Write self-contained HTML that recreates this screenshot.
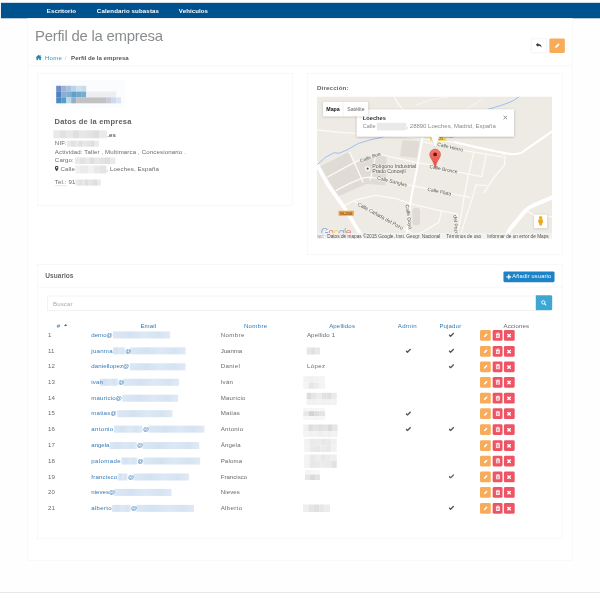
<!DOCTYPE html>
<html lang="es">
<head>
<meta charset="utf-8">
<title>Perfil de la empresa</title>
<style>
*{box-sizing:border-box;margin:0;padding:0}
html,body{width:600px;height:600px;overflow:hidden;background:#fefefe}
body{font-family:"Liberation Sans",sans-serif;}
#s{position:absolute;left:0;top:0;width:1280px;height:1280px;transform:scale(0.46875);transform-origin:0 0;font-size:13px;color:#676a6c;letter-spacing:.28px;line-height:18.57px;background:#fefefe}
a{color:#337ab7;text-decoration:none}
.abs{position:absolute}
.nav{position:absolute;left:1.600px;top:6px;width:1279px;height:32.5px;background:#00528f}
.nav span{position:absolute;top:0;line-height:34px;color:#fff;font-weight:700;letter-spacing:0;white-space:nowrap}
.cont{position:absolute;left:59px;top:38.5px;width:1162px;height:1157px;background:#fff;border:1.500px solid #f0f2f4;border-top:0}
.foot{position:absolute;left:0;top:1263px;width:1280px;height:2px;background:#e4e6e8}
.footb{position:absolute;left:0;top:1265px;width:1280px;height:16px;background:#fff}
h2{position:absolute;left:74.500px;top:57.300px;font-size:31.800px;font-weight:400;line-height:40px;color:#8a8d8f;letter-spacing:-.5px;white-space:nowrap}
.bc{position:absolute;left:76px;top:114px;white-space:nowrap;line-height:18px}
.bc a{color:#3393b6}
.bc b{letter-spacing:0;color:#55585a}
.hr{position:absolute;left:60px;top:139.500px;width:1160px;height:1.5px;background:#eceef0}
.btn{position:absolute;border-radius:3px}
.card{position:absolute;background:#fff;border:1.500px solid #eef1f3}
h3{font-size:16px;font-weight:700;letter-spacing:.45px;color:#5e6163;white-space:nowrap}
.bl{display:inline-block;vertical-align:middle;background:linear-gradient(90deg,#e9e9e9 0 12%,#e2e2e2 12% 24%,#e8e8e8 24% 36%,#dfdfdf 36% 48%,#e7e7e7 48% 62%,#e3e3e3 62% 74%,#dedede 74% 86%,#eaeaea 86%);filter:blur(1.200px)}
.blb{background:linear-gradient(90deg,#dbe7f4,#d3e2f2 30%,#dde8f5 55%,#d5e3f2 80%,#e0eaf6);filter:blur(1.500px)}
#s a.abs{z-index:2}
.ln{position:absolute;left:117px;white-space:nowrap}
</style>
</head>
<body>
<div id="s">
<div class="nav">
<span style="left:98.300px;letter-spacing:.15px">Escritorio</span>
<span style="left:205px;letter-spacing:.3px">Calendario subastas</span>
<span style="left:380px;letter-spacing:.15px">Vehículos</span>
</div>
<div class="cont"></div>
<h2>Perfil de la empresa</h2>
<!-- header buttons -->
<div class="btn" style="left:1132.500px;top:81.500px;width:34px;height:31px;border:1.500px solid #e7eaec;background:#fff">
<svg class="abs" style="left:9.500px;top:8px" width="13" height="12" viewBox="0 0 14 13"><path d="M0 5 L5.5 0 V3 C10 3 13.5 5 13.5 12 C12 8.5 10 7 5.5 7 V10 Z" fill="#3c3f41"/></svg>
</div>
<div class="btn" style="left:1172px;top:81.5px;width:33px;height:31px;background:#f8ac59">
<svg class="abs" style="left:11.500px;top:10.500px" width="10.400" height="10.400" viewBox="0 0 10 10"><path d="M0 10 L0.600 6.800 L6.600 0.800 Q7.400 0 8.200 0.800 L9.200 1.800 Q10 2.600 9.200 3.400 L3.200 9.400 Z" fill="#fff"/></svg>
</div>
<div class="bc">
<svg style="vertical-align:-1.5px;margin-right:3px" width="13" height="12" viewBox="0 0 13 12"><path d="M6.5 0 L13 5.6 L12.2 6.5 L11.2 5.7 V11.5 H7.8 V7.6 H5.2 V11.5 H1.8 V5.7 L.8 6.5 L0 5.6 Z M9.6 .8 H11.2 V3.2 L9.6 1.9 Z" fill="#1f86ab"/></svg>
<a style="letter-spacing:.55px">Home</a><span style="color:#c0c2c4;margin:0 9.500px 0 5.500px">/</span><b>Perfil de la empresa</b>
</div>
<div class="hr"></div>

<!-- LEFT CARD -->
<div class="card" style="left:80px;top:156px;width:544.5px;height:282.5px"></div>
<svg class="abs" style="left:100px;top:165px;filter:blur(1.3px)" width="190" height="75" viewBox="46.875 77.344 89.0625 35.156">
<rect x="51" y="80" width="74" height="27.5" fill="#fbfcfd"/>
<g>
<rect x="56.2" y="85.8" width="5.1" height="5.9" fill="#6c8cc8"/><rect x="61.2" y="85.8" width="5.1" height="5.9" fill="#a0b0d8"/><rect x="66.2" y="85.8" width="5.1" height="5.9" fill="#a8c0dc"/><rect x="71.2" y="85.8" width="5.1" height="5.9" fill="#b8d4e8"/><rect x="76.2" y="85.8" width="5.1" height="5.9" fill="#d0e0ec"/><rect x="81.2" y="85.8" width="5.1" height="5.9" fill="#c8dcec"/>
<rect x="56.2" y="91.6" width="5.1" height="5.9" fill="#4f7fc0"/><rect x="61.2" y="91.6" width="5.1" height="5.9" fill="#90acd4"/><rect x="66.2" y="91.6" width="5.1" height="5.9" fill="#80b0d4"/><rect x="71.2" y="91.6" width="5.1" height="5.9" fill="#60a0c8"/><rect x="76.2" y="91.6" width="5.1" height="5.9" fill="#70a8cc"/><rect x="81.2" y="91.6" width="5.1" height="5.9" fill="#78accc"/><rect x="86.2" y="91.6" width="30" height="5.9" fill="#eceef2"/>
<rect x="56.2" y="97.4" width="5.1" height="5.9" fill="#5088c0"/><rect x="61.2" y="97.4" width="5.1" height="5.9" fill="#50a0c8"/><rect x="66.2" y="97.4" width="5.1" height="5.9" fill="#c0d8e8"/><rect x="71.2" y="97.4" width="5.1" height="5.9" fill="#90b0c8"/><rect x="76.2" y="97.4" width="30.5" height="5.9" fill="#c2c2c2"/><rect x="106.5" y="97.4" width="5" height="5.9" fill="#c8ccd8"/><rect x="111.2" y="97.4" width="5" height="5.9" fill="#d0d8ec"/><rect x="116.2" y="97.4" width="4.8" height="5.9" fill="#dce4f4"/>
</g>
</svg>
<h3 class="abs" style="left:116.5px;top:248.2px;line-height:22px">Datos de la empresa</h3>
<div class="ln" style="top:278.5px"><span class="bl" style="width:114px;height:17px;margin-top:-4px;margin-right:1px;margin-left:-3px"></span><b style="letter-spacing:0;color:#55585a">.es</b></div>
<div class="ln" style="top:296.8px">NIF: <span class="bl" style="width:68px;height:13px;margin-left:-4px"></span></div>
<div class="ln" style="top:314.6px">Actividad: Taller , Multimarca , Concesionario .</div>
<div class="ln" style="top:333.2px">Cargo: <span class="bl" style="width:86px;height:14px;margin-left:-2px"></span></div>
<div class="ln" style="top:351.8px"><svg style="vertical-align:-1.5px;margin-right:4px" width="8" height="12" viewBox="0 0 8 12"><path d="M4 0 A4 4 0 0 1 8 4 C8 6.5 5.2 9.5 4 12 C2.8 9.5 0 6.500 0 4 A4 4 0 0 1 4 0 Z M4 2.300 A1.700 1.700 0 1 0 4 5.700 A1.700 1.700 0 1 0 4 2.300 Z" fill="#3c3f41" fill-rule="evenodd"/></svg>Calle <span class="bl" style="width:66px;height:17px;background:linear-gradient(90deg,#f0f0f0 0 15%,#ebebeb 15% 40%,#f1f1f1 40% 60%,#e9e9e9 60% 80%,#e4e4e4 80%);margin-left:-3px"></span>, Loeches, España</div>
<div class="ln" style="top:380px"><span style="border-bottom:1.5px dotted #999">Tel.:</span> 91<span class="bl" style="width:54px;height:13px"></span></div>

<!-- RIGHT CARD -->
<div class="card" style="left:655.5px;top:156px;width:544.5px;height:387.5px"></div>
<b class="abs" style="left:676px;top:177.500px;letter-spacing:.45px;color:#5e6163">Dirección:</b>
<!--MAPSTART--><svg class="abs" style="left:675.500px;top:206.300px;letter-spacing:0" width="502.200" height="303.500" viewBox="316.640 96.700 235.406 142.266" font-family="'Liberation Sans',sans-serif">
<defs><clipPath id="mc"><rect x="316.640" y="96.700" width="235.406" height="142.266"/></clipPath>
<linearGradient id="mg" x1="0" y1="0" x2="0" y2="1"><stop offset="0" stop-color="#f4776d"/><stop offset="1" stop-color="#ea4a40"/></linearGradient>
<filter id="sh" x="-10%" y="-20%" width="120%" height="150%"><feGaussianBlur stdDeviation="1"/></filter></defs>
<g clip-path="url(#mc)">
<rect x="316" y="96" width="237" height="144" fill="#eeebe5"/>
<!-- darker blocks -->
<path d="M319.700 166.600 L348.300 152.200 L353 162.500 L360 160 L375.300 154.700 L380.700 154.700 L386.500 156 L385.500 185.500 L366.300 184.100 L338.300 196.300 Z" fill="#e0dcd5"/>
<path d="M402.300 140.500 L419.500 141.500 L416.700 158 L399.800 156.500 Z" fill="#e0dcd5"/>
<rect x="412.250" y="208.250" width="7.500" height="17.250" rx="2.500" fill="#dfdbd4"/>
<!-- thin streets -->
<g fill="none" stroke="#fbfaf7" stroke-width="1.300" stroke-linecap="round" stroke-linejoin="round">
<path d="M317.200 130 L340 132.500 L356 133.500 L400 136 L430 140 L455 142.500"/>
<path d="M394 96.700 L398 104 L403 110"/>
<path d="M416 105 L430 100 L448 97" stroke-width=".9" opacity=".8"/>
<path d="M467 109 L483 98.700" stroke-width=".9" opacity=".8"/>
<path d="M348.800 152.600 L350 153.300 L362.700 182"/>
<path d="M327.300 177.100 L350 164.700 L360 160 L375.300 154.700 L380.700 154.700 L416.700 162.700 L430 164.900 L455 171.700 L481.700 176.700"/>
<path d="M336 190.500 L350 183.300 L362.700 178 L370 177.300 L385 180 L412.700 186 L430 189.300 L470 197.750"/>
<path d="M375.300 156 L370 180"/>
<path d="M423.500 142 L455 149.200 L501.700 156.700"/>
<path d="M505 156.700 L504.200 165 L493.300 178.300 L484.200 192.500"/>
<path d="M473.300 153.300 L468.300 175 L463.300 200 L461 215 L456.500 238"/>
<path d="M485.800 155.800 L481.700 175.800"/>
<path d="M475.800 185 L486.700 185.800 M475.800 185 L471.700 200 L467 213.500 L461 233"/>
<path d="M345 205.250 L355.500 200 L375 195.500 L395 198.500 L410 203.750 L441.500 211.250 L455 213.500 L457.250 215 L456.500 238"/>
<path d="M355 202 L380 216 L402 228 L420 238"/>
<path d="M441.500 211.250 L438.500 222.500 L423.500 231.500 L410 238"/>
<path d="M527.500 211.700 L535 215.800 L552 217"/>
</g>
<circle cx="503.300" cy="156.700" r="1.600" fill="#ece9e2" stroke="#fbfaf7" stroke-width="1"/>
<!-- wider streets -->
<g fill="none" stroke="#ffffff" stroke-linecap="round" stroke-linejoin="round">
<path d="M422.300 137.500 L416.500 170 L410.500 200 L407 230 L405.500 240" stroke-width="2"/>
<path d="M455 142.500 L488.300 150 L510 154.200 Q518 154.500 521.700 152.500 L535 143.300 L552 131.500" stroke-width="2.200"/>
<path d="M316 163 L327.750 185 L345 209 L358.500 231.500 L364 241" stroke-width="3.800"/>
<path d="M503 241 L510 229 L525 210.800 Q530 206.500 536 204.300 L553 197.200" stroke-width="4"/>
</g>
<!-- river -->
<path d="M316 165.500 L325.500 157.300 L333.700 152.900 L338.900 153.400 L347.100 149.900 L358.300 143.500 L370 140 L381 137.600 L390 134 L430 133 L446 137.300 L452 137.700 L460 133 L470 125 L488.300 109.300 L501.700 105.300 L512.300 101.300 L520 96" fill="none" stroke="#9abcf2" stroke-width=".95" stroke-linejoin="round"/>
<!-- labels -->
<g font-size="5" fill="#555555" stroke="#f4f2ec" stroke-width="1.200" paint-order="stroke" stroke-linejoin="round">
<text transform="translate(360.500 162.800) rotate(-21)">Calle Boa</text>
<text x="372" y="168" font-size="5.500" textLength="44" lengthAdjust="spacingAndGlyphs">Polígono Industrial</text>
<text x="372" y="173.600" font-size="5.500" textLength="33.300" lengthAdjust="spacingAndGlyphs">Prado Concejil</text>
<text transform="translate(376.500 179.300) rotate(14)">Calle Sanglas</text>
<text transform="translate(436.800 145.900) rotate(13)">Calle Hierro</text>
<text transform="translate(429 168.200) rotate(11)">Calle Bronce</text>
<text transform="translate(427 191) rotate(11)">Calle Plata</text>
<text transform="translate(357 205.300) rotate(29)">Calle Cañada del Pozo</text>
<text transform="translate(405.300 205) rotate(82)">Calle Goya</text>
<text transform="translate(453.300 215.500) rotate(86)">del Pozo</text>
</g>
<circle cx="367.400" cy="168.800" r="2.700" fill="#fff" stroke="#d8d4cc" stroke-width=".3"/><circle cx="367.400" cy="168.800" r="1.100" fill="#5a5450"/>
<!-- road shields -->
<rect x="338.250" y="210.800" width="15.400" height="5" rx=".6" fill="#f2a544"/>
<text x="346" y="215" font-size="4.300" text-anchor="middle" fill="#5a3a10">M-206</text>
<rect x="430" y="137" width="16" height="4" rx=".6" fill="#f3d548"/>
<text x="438" y="140.500" font-size="3.600" text-anchor="middle" fill="#5a4a10">M-225</text>
<!-- marker -->
<path d="M434.900 149.200 a5.400 5.400 0 0 1 5.400 5.400 c0 3.800 -4.500 6.600 -5.100 13.600 h-.6 c-.6 -7 -5.100 -9.800 -5.100 -13.600 a5.400 5.400 0 0 1 5.400 -5.400 z" fill="url(#mg)" stroke="#cc473d" stroke-width=".5"/>
<circle cx="434.900" cy="154.600" r="1.900" fill="#6a1815"/>
<!-- google logo -->
<text x="320.500" y="236.500" font-size="10.300" font-weight="400" letter-spacing="-.5" opacity=".68" stroke="#fff" stroke-width=".5" paint-order="stroke"><tspan fill="#4a7fe8">G</tspan><tspan fill="#e04a3a">o</tspan><tspan fill="#f2b82e">o</tspan><tspan fill="#4a7fe8">g</tspan><tspan fill="#3aa556">l</tspan><tspan fill="#e04a3a">e</tspan></text>
<!-- bottom bar -->
<rect x="316.500" y="233" width="236" height="6.100" fill="#f3f3f3" opacity=".78"/>
<text x="317.300" y="237.800" font-size="3.600" fill="#6a6a78" opacity=".8">NIC</text>
<g font-size="4.500" fill="#505050">
<text x="327" y="237.900" textLength="113" lengthAdjust="spacingAndGlyphs">Datos de mapas ©2015 Google, Inst. Geogr. Nacional</text>
<text x="446" y="237.900" textLength="35" lengthAdjust="spacingAndGlyphs">Términos de uso</text>
<text x="487" y="237.900" textLength="61.500" lengthAdjust="spacingAndGlyphs">Informar de un error de Maps</text>
</g>
<!-- info window -->
<rect x="356.300" y="110" width="157.600" height="27.400" fill="#000" opacity=".28" filter="url(#sh)"/>
<path d="M431 136.800 L434.900 148 L439 136.800" fill="none" stroke="#b8b4ae" stroke-width=".5" opacity=".7"/>
<path d="M356.300 109.500 H513.900 V136.800 H439 L434.900 147.800 L431 136.800 H356.300 Z" fill="#fff"/>
<text x="362.600" y="120.200" font-size="5.700" font-weight="700" fill="#333">Loeches</text>
<text x="362.600" y="128.600" font-size="5.600" fill="#8a8a8a">Calle</text>
<rect x="376.600" y="123" width="29.400" height="7.500" fill="#e9e9e9" filter="url(#bl1)"/>
<text x="406.300" y="128.600" font-size="5.600" fill="#8a8a8a" textLength="89.200" lengthAdjust="spacingAndGlyphs">, 28890 Loeches, Madrid, España</text>
<path d="M503.300 115.800 l3.600 3.600 m0 -3.600 l-3.600 3.600" stroke="#6a6a6a" stroke-width=".7" fill="none"/>
<!-- map type control -->
<rect x="322.600" y="102.300" width="45.600" height="14.700" fill="#000" opacity=".22" filter="url(#sh)"/>
<rect x="322.600" y="102" width="45.400" height="14.600" rx=".8" fill="#fff"/>
<line x1="343" y1="102" x2="343" y2="116.600" stroke="#ebebeb" stroke-width=".5"/>
<text x="326" y="111.200" font-size="5.300" font-weight="700" fill="#111">Mapa</text>
<text x="347" y="111.200" font-size="5.200" fill="#666">Satélite</text>
<!-- pegman -->
<rect x="534" y="215" width="13.200" height="13.800" fill="#000" opacity=".2" filter="url(#sh)"/>
<rect x="533.800" y="214.700" width="13.200" height="13.600" rx=".8" fill="#fff"/>
<circle cx="540.400" cy="218" r="1.800" fill="#f2b01e"/>
<path d="M538.400 219.300 h4 l.7 3.300 h-1 l-.5 3 h-2.400 l-.5 -3 h-1 z" fill="#f0a81c"/>
</g>
</svg>
<!--MAPEND-->

<!-- USERS CARD -->
<div class="card" style="left:80px;top:563.5px;width:1120px;height:586px"></div>
<!--USERSSTART-->
<div class="abs" style="left:96.5px;top:578.5px;font-size:14px;font-weight:700;letter-spacing:.05px;color:#676a6c;line-height:18px">Usuarios</div>
<div class="abs" style="left:81.500px;top:611.500px;width:1117px;height:1.500px;background:#eceef0"></div>
<div class="btn" style="left:1074px;top:578.500px;width:109px;height:23px;background:#1c84c6;color:#fff;font-size:12px;line-height:23px;white-space:nowrap;letter-spacing:.42px"><svg class="abs" style="left:5.500px;top:6px" width="11" height="11" viewBox="0 0 10 10"><path d="M3.800 0 h2.400 v3.800 h3.800 v2.400 h-3.800 v3.800 h-2.400 v-3.800 h-3.800 v-2.400 h3.800 z" fill="#fff"/></svg><span class="abs" style="left:19px;top:0">Añadir usuario</span></div>
<div class="abs" style="left:101px;top:630.500px;width:1043px;height:32.500px;border:1.500px solid #e5e6e7;border-right:0;background:#fff"></div>
<div class="abs" style="left:113px;top:638.500px;color:#a8aaac;font-size:13px">Buscar</div>
<div class="abs" style="left:1143px;top:629.700px;width:34.500px;height:32.300px;background:#3ea6d2;border-radius:0 3px 3px 0"><svg class="abs" style="left:11px;top:10px" width="12" height="12" viewBox="0 0 12 12"><circle cx="5" cy="5" r="3.600" fill="none" stroke="#fff" stroke-width="1.900"/><path d="M7.600 7.600 L11 11" stroke="#fff" stroke-width="2.200" stroke-linecap="round"/></svg></div>
<div class="abs" style="left:121.3px;top:686.7px;color:#337ab7;white-space:nowrap">#</div>
<svg class="abs" style="left:136px;top:690.5px" width="8" height="5" viewBox="0 0 8 5"><path d="M0 5 L4 0 L8 5 Z" fill="#337ab7"/></svg>
<div class="abs" style="left:299.5px;top:686.7px;color:#337ab7;white-space:nowrap">Email</div>
<div class="abs" style="left:520.3px;top:686.7px;color:#337ab7;white-space:nowrap;letter-spacing:.7px">Nombre</div>
<div class="abs" style="left:702.2px;top:686.7px;color:#337ab7;white-space:nowrap">Apellidos</div>
<div class="abs" style="left:848.3px;top:686.7px;color:#337ab7;white-space:nowrap;letter-spacing:.9px">Admin</div>
<div class="abs" style="left:937.4px;top:686.7px;color:#337ab7;white-space:nowrap">Pujador</div>
<div class="abs" style="left:1074px;top:686.7px;color:#676a6c;white-space:nowrap">Acciones</div>
<div class="abs" style="left:102.400px;top:705.4px">1</div>
<a class="abs" style="left:194.8px;top:705.4px;white-space:nowrap;letter-spacing:-0.01px">demo@</a><span class="abs blb" style="left:241.4px;top:707.2px;width:121.2px;height:15px"></span>
<div class="abs" style="left:470.700px;top:705.4px;white-space:nowrap;letter-spacing:0.92px">Nombre</div>
<div class="abs" style="left:654.700px;top:705.4px;white-space:nowrap;letter-spacing:0.33px">Apellido 1</div>
<svg class="abs" style="left:956.7px;top:708.7px" width="12" height="10" viewBox="0 0 12 10"><path d="M1 5.200 L4.300 8.500 L11 1.500" fill="none" stroke="#55585a" stroke-width="2.900"/></svg>
<div class="btn" style="left:1024px;top:703.5px;width:23px;height:23px;background:#f8ac59"><svg class="abs" style="left:7.500px;top:7.300px" width="8.600" height="8.600" viewBox="0 0 10 10"><path d="M0 10 L0.600 6.800 L6.600 0.800 Q7.400 0 8.200 0.800 L9.200 1.800 Q10 2.600 9.200 3.400 L3.200 9.400 Z" fill="#fff"/></svg></div>
<div class="btn" style="left:1051px;top:703.5px;width:21px;height:23px;background:#ed5565"><svg class="abs" style="left:5.500px;top:5px" width="10" height="12" viewBox="0 0 10 12"><path d="M0 1.800 H3 V.6 Q3 0 3.600 0 H6.400 Q7 0 7 .6 V1.800 H10 V3 H0 Z M3.900 .9 V1.800 H6.100 V.9 Z M.9 3.600 H9.100 V11 Q9.100 12 8.100 12 H1.900 Q.9 12 .9 11 Z M2.700 5 V10.500 H3.600 V5 Z M4.550 5 V10.500 H5.450 V5 Z M6.400 5 V10.500 H7.300 V5 Z" fill="#fff" fill-rule="evenodd"/></svg></div>
<div class="btn" style="left:1075px;top:703.5px;width:22.500px;height:23px;background:#ed5565"><svg class="abs" style="left:6.300px;top:7px" width="10" height="10" viewBox="0 0 10 10"><path d="M1.500 1.500 L8.500 8.500 M8.500 1.500 L1.500 8.500" stroke="#fff" stroke-width="3" fill="none"/></svg></div>
<div class="abs" style="left:102.400px;top:739.5px">11</div>
<a class="abs" style="left:194.8px;top:739.5px;white-space:nowrap;letter-spacing:0.55px">juanma</a><span class="abs blb" style="left:241.4px;top:741.3px;width:25.2px;height:15px"></span><a class="abs" style="left:267.2px;top:739.5px">@</a><span class="abs blb" style="left:278.3px;top:741.3px;width:117.8px;height:15px"></span>
<div class="abs" style="left:470.700px;top:739.5px;white-space:nowrap;letter-spacing:-0.03px">Juanma</div>
<svg class="abs" style="left:865.1px;top:742.8px" width="12" height="10" viewBox="0 0 12 10"><path d="M1 5.200 L4.300 8.500 L11 1.500" fill="none" stroke="#55585a" stroke-width="2.900"/></svg>
<svg class="abs" style="left:956.7px;top:742.8px" width="12" height="10" viewBox="0 0 12 10"><path d="M1 5.200 L4.300 8.500 L11 1.500" fill="none" stroke="#55585a" stroke-width="2.900"/></svg>
<div class="btn" style="left:1024px;top:737.6px;width:23px;height:23px;background:#f8ac59"><svg class="abs" style="left:7.500px;top:7.300px" width="8.600" height="8.600" viewBox="0 0 10 10"><path d="M0 10 L0.600 6.800 L6.600 0.800 Q7.400 0 8.200 0.800 L9.200 1.800 Q10 2.600 9.200 3.400 L3.200 9.400 Z" fill="#fff"/></svg></div>
<div class="btn" style="left:1051px;top:737.6px;width:21px;height:23px;background:#ed5565"><svg class="abs" style="left:5.500px;top:5px" width="10" height="12" viewBox="0 0 10 12"><path d="M0 1.800 H3 V.6 Q3 0 3.600 0 H6.400 Q7 0 7 .6 V1.800 H10 V3 H0 Z M3.900 .9 V1.800 H6.100 V.9 Z M.9 3.600 H9.100 V11 Q9.100 12 8.100 12 H1.900 Q.9 12 .9 11 Z M2.700 5 V10.500 H3.600 V5 Z M4.550 5 V10.500 H5.450 V5 Z M6.400 5 V10.500 H7.300 V5 Z" fill="#fff" fill-rule="evenodd"/></svg></div>
<div class="btn" style="left:1075px;top:737.6px;width:22.500px;height:23px;background:#ed5565"><svg class="abs" style="left:6.300px;top:7px" width="10" height="10" viewBox="0 0 10 10"><path d="M1.500 1.500 L8.500 8.500 M8.500 1.500 L1.500 8.500" stroke="#fff" stroke-width="3" fill="none"/></svg></div>
<div class="abs" style="left:102.400px;top:773.0px">12</div>
<a class="abs" style="left:194.8px;top:773.0px;white-space:nowrap;letter-spacing:0.18px">daniellopez@</a><span class="abs blb" style="left:276.8px;top:774.8px;width:119.3px;height:15px"></span>
<div class="abs" style="left:470.700px;top:773.0px;white-space:nowrap;letter-spacing:0.78px">Daniel</div>
<div class="abs" style="left:654.700px;top:773.0px;white-space:nowrap;letter-spacing:0.80px">López</div>
<svg class="abs" style="left:956.7px;top:776.3px" width="12" height="10" viewBox="0 0 12 10"><path d="M1 5.200 L4.300 8.500 L11 1.500" fill="none" stroke="#55585a" stroke-width="2.900"/></svg>
<div class="btn" style="left:1024px;top:771.1px;width:23px;height:23px;background:#f8ac59"><svg class="abs" style="left:7.500px;top:7.300px" width="8.600" height="8.600" viewBox="0 0 10 10"><path d="M0 10 L0.600 6.800 L6.600 0.800 Q7.400 0 8.200 0.800 L9.200 1.800 Q10 2.600 9.200 3.400 L3.200 9.400 Z" fill="#fff"/></svg></div>
<div class="btn" style="left:1051px;top:771.1px;width:21px;height:23px;background:#ed5565"><svg class="abs" style="left:5.500px;top:5px" width="10" height="12" viewBox="0 0 10 12"><path d="M0 1.800 H3 V.6 Q3 0 3.600 0 H6.400 Q7 0 7 .6 V1.800 H10 V3 H0 Z M3.900 .9 V1.800 H6.100 V.9 Z M.9 3.600 H9.100 V11 Q9.100 12 8.100 12 H1.900 Q.9 12 .9 11 Z M2.700 5 V10.500 H3.600 V5 Z M4.550 5 V10.500 H5.450 V5 Z M6.400 5 V10.500 H7.300 V5 Z" fill="#fff" fill-rule="evenodd"/></svg></div>
<div class="btn" style="left:1075px;top:771.1px;width:22.500px;height:23px;background:#ed5565"><svg class="abs" style="left:6.300px;top:7px" width="10" height="10" viewBox="0 0 10 10"><path d="M1.500 1.500 L8.500 8.500 M8.500 1.500 L1.500 8.500" stroke="#fff" stroke-width="3" fill="none"/></svg></div>
<div class="abs" style="left:102.400px;top:806.3px">13</div>
<a class="abs" style="left:194.8px;top:806.3px;white-space:nowrap;letter-spacing:.3px">ivan</a><span class="abs blb" style="left:212.8px;top:808.1px;width:38.9px;height:15px"></span><a class="abs" style="left:252.2px;top:806.3px">@</a><span class="abs blb" style="left:263.4px;top:808.1px;width:119.1px;height:15px"></span>
<div class="abs" style="left:470.700px;top:806.3px;white-space:nowrap;letter-spacing:.6px">Iván</div>
<div class="btn" style="left:1024px;top:804.4px;width:23px;height:23px;background:#f8ac59"><svg class="abs" style="left:7.500px;top:7.300px" width="8.600" height="8.600" viewBox="0 0 10 10"><path d="M0 10 L0.600 6.800 L6.600 0.800 Q7.400 0 8.200 0.800 L9.200 1.800 Q10 2.600 9.200 3.400 L3.200 9.400 Z" fill="#fff"/></svg></div>
<div class="btn" style="left:1051px;top:804.4px;width:21px;height:23px;background:#ed5565"><svg class="abs" style="left:5.500px;top:5px" width="10" height="12" viewBox="0 0 10 12"><path d="M0 1.800 H3 V.6 Q3 0 3.600 0 H6.400 Q7 0 7 .6 V1.800 H10 V3 H0 Z M3.900 .9 V1.800 H6.100 V.9 Z M.9 3.600 H9.100 V11 Q9.100 12 8.100 12 H1.900 Q.9 12 .9 11 Z M2.700 5 V10.500 H3.600 V5 Z M4.550 5 V10.500 H5.450 V5 Z M6.400 5 V10.500 H7.300 V5 Z" fill="#fff" fill-rule="evenodd"/></svg></div>
<div class="btn" style="left:1075px;top:804.4px;width:22.500px;height:23px;background:#ed5565"><svg class="abs" style="left:6.300px;top:7px" width="10" height="10" viewBox="0 0 10 10"><path d="M1.500 1.500 L8.500 8.500 M8.500 1.500 L1.500 8.500" stroke="#fff" stroke-width="3" fill="none"/></svg></div>
<div class="abs" style="left:102.400px;top:839.8px">14</div>
<a class="abs" style="left:194.8px;top:839.8px;white-space:nowrap;letter-spacing:0.37px">mauricio@</a><span class="abs blb" style="left:261.3px;top:841.6px;width:119.1px;height:15px"></span>
<div class="abs" style="left:470.700px;top:839.8px;white-space:nowrap;letter-spacing:0.56px">Mauricio</div>
<div class="btn" style="left:1024px;top:837.9px;width:23px;height:23px;background:#f8ac59"><svg class="abs" style="left:7.500px;top:7.300px" width="8.600" height="8.600" viewBox="0 0 10 10"><path d="M0 10 L0.600 6.800 L6.600 0.800 Q7.400 0 8.200 0.800 L9.200 1.800 Q10 2.600 9.200 3.400 L3.200 9.400 Z" fill="#fff"/></svg></div>
<div class="btn" style="left:1051px;top:837.9px;width:21px;height:23px;background:#ed5565"><svg class="abs" style="left:5.500px;top:5px" width="10" height="12" viewBox="0 0 10 12"><path d="M0 1.800 H3 V.6 Q3 0 3.600 0 H6.400 Q7 0 7 .6 V1.800 H10 V3 H0 Z M3.900 .9 V1.800 H6.100 V.9 Z M.9 3.600 H9.100 V11 Q9.100 12 8.100 12 H1.900 Q.9 12 .9 11 Z M2.700 5 V10.500 H3.600 V5 Z M4.550 5 V10.500 H5.450 V5 Z M6.400 5 V10.500 H7.300 V5 Z" fill="#fff" fill-rule="evenodd"/></svg></div>
<div class="btn" style="left:1075px;top:837.9px;width:22.500px;height:23px;background:#ed5565"><svg class="abs" style="left:6.300px;top:7px" width="10" height="10" viewBox="0 0 10 10"><path d="M1.500 1.500 L8.500 8.500 M8.500 1.500 L1.500 8.500" stroke="#fff" stroke-width="3" fill="none"/></svg></div>
<div class="abs" style="left:102.400px;top:873.3px">15</div>
<a class="abs" style="left:194.8px;top:873.3px;white-space:nowrap;letter-spacing:0.41px">matias@</a><span class="abs blb" style="left:250.0px;top:875.1px;width:117.6px;height:15px"></span>
<div class="abs" style="left:470.700px;top:873.3px;white-space:nowrap;letter-spacing:0.39px">Matías</div>
<svg class="abs" style="left:865.1px;top:876.6px" width="12" height="10" viewBox="0 0 12 10"><path d="M1 5.200 L4.300 8.500 L11 1.500" fill="none" stroke="#55585a" stroke-width="2.900"/></svg>
<div class="btn" style="left:1024px;top:871.4px;width:23px;height:23px;background:#f8ac59"><svg class="abs" style="left:7.500px;top:7.300px" width="8.600" height="8.600" viewBox="0 0 10 10"><path d="M0 10 L0.600 6.800 L6.600 0.800 Q7.400 0 8.200 0.800 L9.200 1.800 Q10 2.600 9.200 3.400 L3.200 9.400 Z" fill="#fff"/></svg></div>
<div class="btn" style="left:1051px;top:871.4px;width:21px;height:23px;background:#ed5565"><svg class="abs" style="left:5.500px;top:5px" width="10" height="12" viewBox="0 0 10 12"><path d="M0 1.800 H3 V.6 Q3 0 3.600 0 H6.400 Q7 0 7 .6 V1.800 H10 V3 H0 Z M3.900 .9 V1.800 H6.100 V.9 Z M.9 3.600 H9.100 V11 Q9.100 12 8.100 12 H1.900 Q.9 12 .9 11 Z M2.700 5 V10.500 H3.600 V5 Z M4.550 5 V10.500 H5.450 V5 Z M6.400 5 V10.500 H7.300 V5 Z" fill="#fff" fill-rule="evenodd"/></svg></div>
<div class="btn" style="left:1075px;top:871.4px;width:22.500px;height:23px;background:#ed5565"><svg class="abs" style="left:6.300px;top:7px" width="10" height="10" viewBox="0 0 10 10"><path d="M1.500 1.500 L8.500 8.500 M8.500 1.500 L1.500 8.500" stroke="#fff" stroke-width="3" fill="none"/></svg></div>
<div class="abs" style="left:102.400px;top:906.5px">16</div>
<a class="abs" style="left:194.8px;top:906.5px;white-space:nowrap;letter-spacing:0.66px">antonio</a><span class="abs blb" style="left:242.7px;top:908.3px;width:61.7px;height:15px"></span><a class="abs" style="left:304.9px;top:906.5px">@</a><span class="abs blb" style="left:316.7px;top:908.3px;width:119.1px;height:15px"></span>
<div class="abs" style="left:470.700px;top:906.5px;white-space:nowrap;letter-spacing:0.63px">Antonio</div>
<svg class="abs" style="left:865.1px;top:909.8px" width="12" height="10" viewBox="0 0 12 10"><path d="M1 5.200 L4.300 8.500 L11 1.500" fill="none" stroke="#55585a" stroke-width="2.900"/></svg>
<svg class="abs" style="left:956.7px;top:909.8px" width="12" height="10" viewBox="0 0 12 10"><path d="M1 5.200 L4.300 8.500 L11 1.500" fill="none" stroke="#55585a" stroke-width="2.900"/></svg>
<div class="btn" style="left:1024px;top:904.6px;width:23px;height:23px;background:#f8ac59"><svg class="abs" style="left:7.500px;top:7.300px" width="8.600" height="8.600" viewBox="0 0 10 10"><path d="M0 10 L0.600 6.800 L6.600 0.800 Q7.400 0 8.200 0.800 L9.200 1.800 Q10 2.600 9.200 3.400 L3.200 9.400 Z" fill="#fff"/></svg></div>
<div class="btn" style="left:1051px;top:904.6px;width:21px;height:23px;background:#ed5565"><svg class="abs" style="left:5.500px;top:5px" width="10" height="12" viewBox="0 0 10 12"><path d="M0 1.800 H3 V.6 Q3 0 3.600 0 H6.400 Q7 0 7 .6 V1.800 H10 V3 H0 Z M3.900 .9 V1.800 H6.100 V.9 Z M.9 3.600 H9.100 V11 Q9.100 12 8.100 12 H1.900 Q.9 12 .9 11 Z M2.700 5 V10.500 H3.600 V5 Z M4.550 5 V10.500 H5.450 V5 Z M6.400 5 V10.500 H7.300 V5 Z" fill="#fff" fill-rule="evenodd"/></svg></div>
<div class="btn" style="left:1075px;top:904.6px;width:22.500px;height:23px;background:#ed5565"><svg class="abs" style="left:6.300px;top:7px" width="10" height="10" viewBox="0 0 10 10"><path d="M1.500 1.500 L8.500 8.500 M8.500 1.500 L1.500 8.500" stroke="#fff" stroke-width="3" fill="none"/></svg></div>
<div class="abs" style="left:102.400px;top:940.7px">17</div>
<a class="abs" style="left:194.8px;top:940.7px;white-space:nowrap;letter-spacing:-0.12px">angela</a><span class="abs blb" style="left:234.2px;top:942.5px;width:57.5px;height:15px"></span><a class="abs" style="left:292.1px;top:940.7px">@</a><span class="abs blb" style="left:303.9px;top:942.5px;width:121.2px;height:15px"></span>
<div class="abs" style="left:470.700px;top:940.7px;white-space:nowrap;letter-spacing:0.40px">Ángela</div>
<div class="btn" style="left:1024px;top:938.8px;width:23px;height:23px;background:#f8ac59"><svg class="abs" style="left:7.500px;top:7.300px" width="8.600" height="8.600" viewBox="0 0 10 10"><path d="M0 10 L0.600 6.800 L6.600 0.800 Q7.400 0 8.200 0.800 L9.200 1.800 Q10 2.600 9.200 3.400 L3.200 9.400 Z" fill="#fff"/></svg></div>
<div class="btn" style="left:1051px;top:938.8px;width:21px;height:23px;background:#ed5565"><svg class="abs" style="left:5.500px;top:5px" width="10" height="12" viewBox="0 0 10 12"><path d="M0 1.800 H3 V.6 Q3 0 3.600 0 H6.400 Q7 0 7 .6 V1.800 H10 V3 H0 Z M3.900 .9 V1.800 H6.100 V.9 Z M.9 3.600 H9.100 V11 Q9.100 12 8.100 12 H1.900 Q.9 12 .9 11 Z M2.700 5 V10.500 H3.600 V5 Z M4.550 5 V10.500 H5.450 V5 Z M6.400 5 V10.500 H7.300 V5 Z" fill="#fff" fill-rule="evenodd"/></svg></div>
<div class="btn" style="left:1075px;top:938.8px;width:22.500px;height:23px;background:#ed5565"><svg class="abs" style="left:6.300px;top:7px" width="10" height="10" viewBox="0 0 10 10"><path d="M1.500 1.500 L8.500 8.500 M8.500 1.500 L1.500 8.500" stroke="#fff" stroke-width="3" fill="none"/></svg></div>
<div class="abs" style="left:102.400px;top:974.2px">18</div>
<a class="abs" style="left:194.8px;top:974.2px;white-space:nowrap;letter-spacing:0.75px">palomade</a><span class="abs blb" style="left:258.5px;top:976.0px;width:34.4px;height:15px"></span><a class="abs" style="left:293.4px;top:974.2px">@</a><span class="abs blb" style="left:306.1px;top:976.0px;width:120.6px;height:15px"></span>
<div class="abs" style="left:470.700px;top:974.2px;white-space:nowrap;letter-spacing:0.36px">Paloma</div>
<div class="btn" style="left:1024px;top:972.3px;width:23px;height:23px;background:#f8ac59"><svg class="abs" style="left:7.500px;top:7.300px" width="8.600" height="8.600" viewBox="0 0 10 10"><path d="M0 10 L0.600 6.800 L6.600 0.800 Q7.400 0 8.200 0.800 L9.200 1.800 Q10 2.600 9.200 3.400 L3.200 9.400 Z" fill="#fff"/></svg></div>
<div class="btn" style="left:1051px;top:972.3px;width:21px;height:23px;background:#ed5565"><svg class="abs" style="left:5.500px;top:5px" width="10" height="12" viewBox="0 0 10 12"><path d="M0 1.800 H3 V.6 Q3 0 3.600 0 H6.400 Q7 0 7 .6 V1.800 H10 V3 H0 Z M3.900 .9 V1.800 H6.100 V.9 Z M.9 3.600 H9.100 V11 Q9.100 12 8.100 12 H1.900 Q.9 12 .9 11 Z M2.700 5 V10.500 H3.600 V5 Z M4.550 5 V10.500 H5.450 V5 Z M6.400 5 V10.500 H7.300 V5 Z" fill="#fff" fill-rule="evenodd"/></svg></div>
<div class="btn" style="left:1075px;top:972.3px;width:22.500px;height:23px;background:#ed5565"><svg class="abs" style="left:6.300px;top:7px" width="10" height="10" viewBox="0 0 10 10"><path d="M1.500 1.500 L8.500 8.500 M8.500 1.500 L1.500 8.500" stroke="#fff" stroke-width="3" fill="none"/></svg></div>
<div class="abs" style="left:102.400px;top:1007.7px">19</div>
<a class="abs" style="left:194.8px;top:1007.7px;white-space:nowrap;letter-spacing:0.40px">francisco</a><span class="abs blb" style="left:251.2px;top:1009.5px;width:21.2px;height:15px"></span><a class="abs" style="left:272.9px;top:1007.7px">@</a><span class="abs blb" style="left:284.7px;top:1009.5px;width:118.5px;height:15px"></span>
<div class="abs" style="left:470.700px;top:1007.7px;white-space:nowrap;letter-spacing:0.05px">Francisco</div>
<svg class="abs" style="left:956.7px;top:1011.0px" width="12" height="10" viewBox="0 0 12 10"><path d="M1 5.200 L4.300 8.500 L11 1.500" fill="none" stroke="#55585a" stroke-width="2.900"/></svg>
<div class="btn" style="left:1024px;top:1005.8px;width:23px;height:23px;background:#f8ac59"><svg class="abs" style="left:7.500px;top:7.300px" width="8.600" height="8.600" viewBox="0 0 10 10"><path d="M0 10 L0.600 6.800 L6.600 0.800 Q7.400 0 8.200 0.800 L9.200 1.800 Q10 2.600 9.200 3.400 L3.200 9.400 Z" fill="#fff"/></svg></div>
<div class="btn" style="left:1051px;top:1005.8px;width:21px;height:23px;background:#ed5565"><svg class="abs" style="left:5.500px;top:5px" width="10" height="12" viewBox="0 0 10 12"><path d="M0 1.800 H3 V.6 Q3 0 3.600 0 H6.400 Q7 0 7 .6 V1.800 H10 V3 H0 Z M3.900 .9 V1.800 H6.100 V.9 Z M.9 3.600 H9.100 V11 Q9.100 12 8.100 12 H1.900 Q.9 12 .9 11 Z M2.700 5 V10.500 H3.600 V5 Z M4.550 5 V10.500 H5.450 V5 Z M6.400 5 V10.500 H7.300 V5 Z" fill="#fff" fill-rule="evenodd"/></svg></div>
<div class="btn" style="left:1075px;top:1005.8px;width:22.500px;height:23px;background:#ed5565"><svg class="abs" style="left:6.300px;top:7px" width="10" height="10" viewBox="0 0 10 10"><path d="M1.500 1.500 L8.500 8.500 M8.500 1.500 L1.500 8.500" stroke="#fff" stroke-width="3" fill="none"/></svg></div>
<div class="abs" style="left:102.400px;top:1040.9px">20</div>
<a class="abs" style="left:194.8px;top:1040.9px;white-space:nowrap;letter-spacing:0px">nieves@</a><span class="abs blb" style="left:244.2px;top:1042.7px;width:122.1px;height:15px"></span>
<div class="abs" style="left:470.700px;top:1040.9px;white-space:nowrap;letter-spacing:0.26px">Nieves</div>
<div class="btn" style="left:1024px;top:1039.0px;width:23px;height:23px;background:#f8ac59"><svg class="abs" style="left:7.500px;top:7.300px" width="8.600" height="8.600" viewBox="0 0 10 10"><path d="M0 10 L0.600 6.800 L6.600 0.800 Q7.400 0 8.200 0.800 L9.200 1.800 Q10 2.600 9.200 3.400 L3.200 9.400 Z" fill="#fff"/></svg></div>
<div class="btn" style="left:1051px;top:1039.0px;width:21px;height:23px;background:#ed5565"><svg class="abs" style="left:5.500px;top:5px" width="10" height="12" viewBox="0 0 10 12"><path d="M0 1.800 H3 V.6 Q3 0 3.600 0 H6.400 Q7 0 7 .6 V1.800 H10 V3 H0 Z M3.900 .9 V1.800 H6.100 V.9 Z M.9 3.600 H9.100 V11 Q9.100 12 8.100 12 H1.900 Q.9 12 .9 11 Z M2.700 5 V10.500 H3.600 V5 Z M4.550 5 V10.500 H5.450 V5 Z M6.400 5 V10.500 H7.300 V5 Z" fill="#fff" fill-rule="evenodd"/></svg></div>
<div class="btn" style="left:1075px;top:1039.0px;width:22.500px;height:23px;background:#ed5565"><svg class="abs" style="left:6.300px;top:7px" width="10" height="10" viewBox="0 0 10 10"><path d="M1.500 1.500 L8.500 8.500 M8.500 1.500 L1.500 8.500" stroke="#fff" stroke-width="3" fill="none"/></svg></div>
<div class="abs" style="left:102.400px;top:1075.1px">21</div>
<a class="abs" style="left:194.8px;top:1075.1px;white-space:nowrap;letter-spacing:0.58px">alberto</a><span class="abs blb" style="left:239.3px;top:1076.9px;width:39.5px;height:15px"></span><a class="abs" style="left:279.3px;top:1075.1px">@</a><span class="abs blb" style="left:291.1px;top:1076.9px;width:122.7px;height:15px"></span>
<div class="abs" style="left:470.700px;top:1075.1px;white-space:nowrap;letter-spacing:0.75px">Alberto</div>
<svg class="abs" style="left:956.7px;top:1078.4px" width="12" height="10" viewBox="0 0 12 10"><path d="M1 5.200 L4.300 8.500 L11 1.500" fill="none" stroke="#55585a" stroke-width="2.900"/></svg>
<div class="btn" style="left:1024px;top:1073.2px;width:23px;height:23px;background:#f8ac59"><svg class="abs" style="left:7.500px;top:7.300px" width="8.600" height="8.600" viewBox="0 0 10 10"><path d="M0 10 L0.600 6.800 L6.600 0.800 Q7.400 0 8.200 0.800 L9.200 1.800 Q10 2.600 9.200 3.400 L3.200 9.400 Z" fill="#fff"/></svg></div>
<div class="btn" style="left:1051px;top:1073.2px;width:21px;height:23px;background:#ed5565"><svg class="abs" style="left:5.500px;top:5px" width="10" height="12" viewBox="0 0 10 12"><path d="M0 1.800 H3 V.6 Q3 0 3.600 0 H6.400 Q7 0 7 .6 V1.800 H10 V3 H0 Z M3.900 .9 V1.800 H6.100 V.9 Z M.9 3.600 H9.100 V11 Q9.100 12 8.100 12 H1.900 Q.9 12 .9 11 Z M2.700 5 V10.500 H3.600 V5 Z M4.550 5 V10.500 H5.450 V5 Z M6.400 5 V10.500 H7.300 V5 Z" fill="#fff" fill-rule="evenodd"/></svg></div>
<div class="btn" style="left:1075px;top:1073.2px;width:22.500px;height:23px;background:#ed5565"><svg class="abs" style="left:6.300px;top:7px" width="10" height="10" viewBox="0 0 10 10"><path d="M1.500 1.500 L8.500 8.500 M8.500 1.500 L1.500 8.500" stroke="#fff" stroke-width="3" fill="none"/></svg></div>
<svg class="abs" style="left:0;top:0;filter:blur(1.300px)" width="1280" height="1280" viewBox="0 0 600 600">
<rect x="306.70" y="347.50" width="4.48" height="7.05" fill="#e6e6e6"/>
<rect x="311.13" y="347.50" width="4.48" height="7.05" fill="#e0e0e0"/>
<rect x="315.57" y="347.50" width="4.48" height="7.05" fill="#e8e8e8"/>
<rect x="303.30" y="376.20" width="5.47" height="6.35" fill="#f3f3f3"/>
<rect x="308.73" y="376.20" width="5.47" height="6.35" fill="#f1f1f1"/>
<rect x="314.15" y="376.20" width="5.47" height="6.35" fill="#f2f2f2"/>
<rect x="319.57" y="376.20" width="5.47" height="6.35" fill="#f4f4f4"/>
<rect x="303.30" y="382.50" width="5.47" height="6.25" fill="#f4f4f4"/>
<rect x="308.73" y="382.50" width="5.47" height="6.25" fill="#e6e6e6"/>
<rect x="314.15" y="382.50" width="5.47" height="6.25" fill="#ececec"/>
<rect x="319.57" y="382.50" width="5.47" height="6.25" fill="#f4f4f4"/>
<rect x="306.70" y="392.80" width="5.05" height="6.75" fill="#dcdcdc"/>
<rect x="311.70" y="392.80" width="5.05" height="6.75" fill="#e6e6e6"/>
<rect x="316.70" y="392.80" width="5.05" height="6.75" fill="#ececec"/>
<rect x="321.70" y="392.80" width="5.05" height="6.75" fill="#e2e2e2"/>
<rect x="326.70" y="392.80" width="5.05" height="6.75" fill="#e0e0e0"/>
<rect x="331.70" y="392.80" width="5.05" height="6.75" fill="#eaeaea"/>
<rect x="306.70" y="399.50" width="5.05" height="5.55" fill="#f2f2f2"/>
<rect x="311.70" y="399.50" width="5.05" height="5.55" fill="#f1f1f1"/>
<rect x="316.70" y="399.50" width="5.05" height="5.55" fill="#f3f3f3"/>
<rect x="321.70" y="399.50" width="5.05" height="5.55" fill="#f1f1f1"/>
<rect x="326.70" y="399.50" width="5.05" height="5.55" fill="#f2f2f2"/>
<rect x="331.70" y="399.50" width="5.05" height="5.55" fill="#f3f3f3"/>
<rect x="303.30" y="408.00" width="5.47" height="3.25" fill="#f7f7f7"/>
<rect x="308.73" y="408.00" width="5.47" height="3.25" fill="#f6f6f6"/>
<rect x="314.15" y="408.00" width="5.47" height="3.25" fill="#f7f7f7"/>
<rect x="319.57" y="408.00" width="5.47" height="3.25" fill="#f7f7f7"/>
<rect x="303.30" y="411.20" width="5.47" height="5.05" fill="#e8e8e8"/>
<rect x="308.73" y="411.20" width="5.47" height="5.05" fill="#d4d4d4"/>
<rect x="314.15" y="411.20" width="5.47" height="5.05" fill="#dedede"/>
<rect x="319.57" y="411.20" width="5.47" height="5.05" fill="#e4e4e4"/>
<rect x="303.30" y="416.20" width="5.47" height="3.85" fill="#f7f7f7"/>
<rect x="308.73" y="416.20" width="5.47" height="3.85" fill="#f7f7f7"/>
<rect x="314.15" y="416.20" width="5.47" height="3.85" fill="#f6f6f6"/>
<rect x="319.57" y="416.20" width="5.47" height="3.85" fill="#f7f7f7"/>
<rect x="303.30" y="424.50" width="4.94" height="6.75" fill="#f0f0f0"/>
<rect x="308.19" y="424.50" width="4.94" height="6.75" fill="#dedede"/>
<rect x="313.07" y="424.50" width="4.94" height="6.75" fill="#e4e4e4"/>
<rect x="317.96" y="424.50" width="4.94" height="6.75" fill="#e0e0e0"/>
<rect x="322.84" y="424.50" width="4.94" height="6.75" fill="#e4e4e4"/>
<rect x="327.73" y="424.50" width="4.94" height="6.75" fill="#dadada"/>
<rect x="332.61" y="424.50" width="4.94" height="6.75" fill="#e6e6e6"/>
<rect x="303.30" y="431.20" width="4.94" height="5.85" fill="#f4f4f4"/>
<rect x="308.19" y="431.20" width="4.94" height="5.85" fill="#f1f1f1"/>
<rect x="313.07" y="431.20" width="4.94" height="5.85" fill="#f2f2f2"/>
<rect x="317.96" y="431.20" width="4.94" height="5.85" fill="#efefef"/>
<rect x="322.84" y="431.20" width="4.94" height="5.85" fill="#f2f2f2"/>
<rect x="327.73" y="431.20" width="4.94" height="5.85" fill="#f0f0f0"/>
<rect x="332.61" y="431.20" width="4.94" height="5.85" fill="#f2f2f2"/>
<rect x="304.20" y="438.70" width="5.47" height="6.65" fill="#f2f2f2"/>
<rect x="309.62" y="438.70" width="5.47" height="6.65" fill="#eaeaea"/>
<rect x="315.03" y="438.70" width="5.47" height="6.65" fill="#ececec"/>
<rect x="320.45" y="438.70" width="5.47" height="6.65" fill="#e8e8e8"/>
<rect x="325.87" y="438.70" width="5.47" height="6.65" fill="#eaeaea"/>
<rect x="331.28" y="438.70" width="5.47" height="6.65" fill="#f0f0f0"/>
<rect x="304.20" y="445.30" width="5.47" height="6.75" fill="#f3f3f3"/>
<rect x="309.62" y="445.30" width="5.47" height="6.75" fill="#eaeaea"/>
<rect x="315.03" y="445.30" width="5.47" height="6.75" fill="#e8e8e8"/>
<rect x="320.45" y="445.30" width="5.47" height="6.75" fill="#ececec"/>
<rect x="325.87" y="445.30" width="5.47" height="6.75" fill="#e9e9e9"/>
<rect x="331.28" y="445.30" width="5.47" height="6.75" fill="#f2f2f2"/>
<rect x="304.20" y="454.50" width="5.47" height="6.55" fill="#f3f3f3"/>
<rect x="309.62" y="454.50" width="5.47" height="6.55" fill="#e9e9e9"/>
<rect x="315.03" y="454.50" width="5.47" height="6.55" fill="#eeeeee"/>
<rect x="320.45" y="454.50" width="5.47" height="6.55" fill="#e8e8e8"/>
<rect x="325.87" y="454.50" width="5.47" height="6.55" fill="#ececec"/>
<rect x="331.28" y="454.50" width="5.47" height="6.55" fill="#eeeeee"/>
<rect x="304.20" y="461.00" width="5.47" height="6.85" fill="#f3f3f3"/>
<rect x="309.62" y="461.00" width="5.47" height="6.85" fill="#e8e8e8"/>
<rect x="315.03" y="461.00" width="5.47" height="6.85" fill="#eaeaea"/>
<rect x="320.45" y="461.00" width="5.47" height="6.85" fill="#ececec"/>
<rect x="325.87" y="461.00" width="5.47" height="6.85" fill="#eaeaea"/>
<rect x="331.28" y="461.00" width="5.47" height="6.85" fill="#e2e2e2"/>
<rect x="305.00" y="470.00" width="5.05" height="4.55" fill="#f4f4f4"/>
<rect x="310.00" y="470.00" width="5.05" height="4.55" fill="#f7f7f7"/>
<rect x="315.00" y="470.00" width="5.05" height="4.55" fill="#f8f8f8"/>
<rect x="305.00" y="474.50" width="5.05" height="5.55" fill="#e6e6e6"/>
<rect x="310.00" y="474.50" width="5.05" height="5.55" fill="#dadada"/>
<rect x="315.00" y="474.50" width="5.05" height="5.55" fill="#e2e2e2"/>
<rect x="303.00" y="504.50" width="5.45" height="7.55" fill="#eeeeee"/>
<rect x="308.40" y="504.50" width="5.45" height="7.55" fill="#e4e4e4"/>
<rect x="313.80" y="504.50" width="5.45" height="7.55" fill="#e0e0e0"/>
<rect x="319.20" y="504.50" width="5.45" height="7.55" fill="#e6e6e6"/>
<rect x="324.60" y="504.50" width="5.45" height="7.55" fill="#ececec"/>
</svg>
<!--USERSEND-->
<div class="foot"></div><div class="footb"></div>
</div>
</body>
</html>
